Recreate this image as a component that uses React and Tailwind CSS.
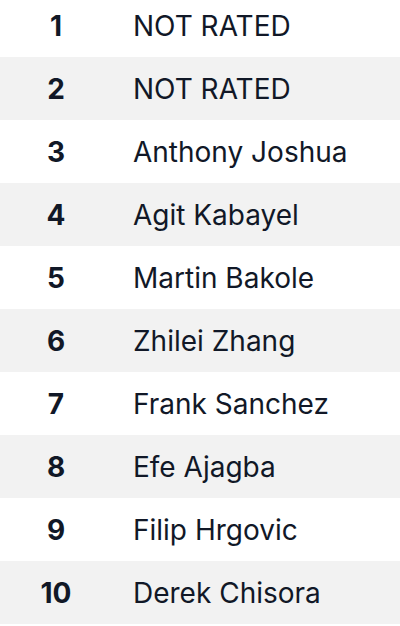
const fighters = [
  'NOT RATED',
  'NOT RATED',
  'Anthony Joshua',
  'Agit Kabayel',
  'Martin Bakole',
  'Zhilei Zhang',
  'Frank Sanchez',
  'Efe Ajagba',
  'Filip Hrgovic',
  'Derek Chisora',
];

export default function App() {
  return (
    <div className="w-[400px] h-[626px] overflow-hidden bg-white font-['Inter',sans-serif] text-[#111827]">
      <div className="-mt-[6px]">
        {fighters.map((name, i) => (
          <div
            key={i}
            className={`flex items-center h-[63px] ${i % 2 === 1 ? 'bg-[#f2f2f2]' : 'bg-white'}`}
          >
            <div className="w-[112px] text-center text-[28px] font-bold">{i + 1}</div>
            <div className="pl-[21px] text-[28px]">{name}</div>
          </div>
        ))}
      </div>
    </div>
  );
}
